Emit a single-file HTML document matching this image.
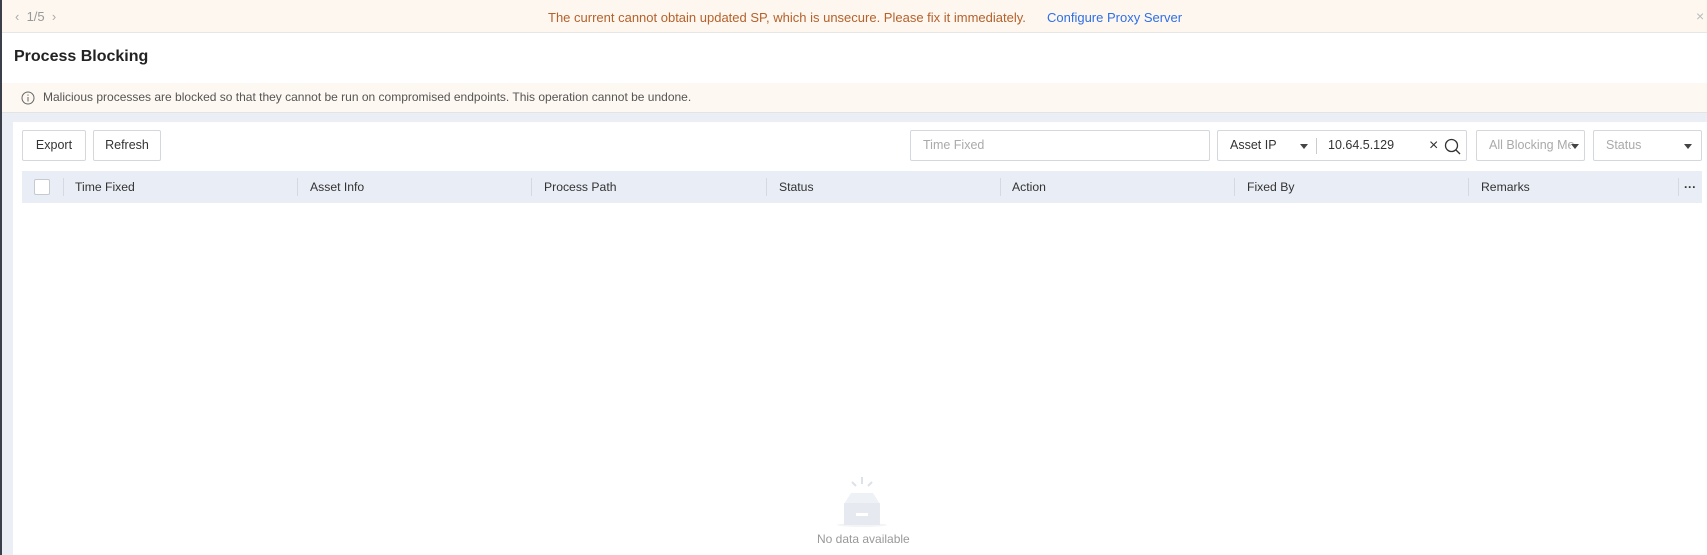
<!DOCTYPE html>
<html><head><meta charset="utf-8"><style>
*{box-sizing:border-box;margin:0;padding:0}
body{width:1707px;height:555px;overflow:hidden;background:#fff;font-family:"Liberation Sans",Arial,sans-serif;font-size:12.5px;color:#333;position:relative}
.abs{position:absolute}
.lb{left:0;top:0;width:2px;height:555px;background:#3a3f4a}
.top{left:2px;top:0;width:1705px;height:33px;background:#fdf7ef;border-bottom:1px solid #e6e6e6}
.info{left:2px;top:83px;width:1705px;height:29px;background:#fdf8f1}
.band{left:2px;top:112px;width:1705px;height:10px;background:#ebeef4;border-top:1px solid #e3e3e3}
.btn{border:1px solid #d4d7dc;border-radius:2px;background:#fff;height:31px;line-height:29px;text-align:center;color:#333}
.inp{border:1px solid #d4d7dc;border-radius:2px;background:#fff;height:31px;line-height:29px;color:#aaa;padding-left:12px}
.hdr{left:22px;top:171px;width:1680px;height:32px;background:#e9edf5}
.col{top:171px;height:32px;line-height:32px;color:#333;font-size:12.2px}
.div{top:178px;width:1px;height:18px;background:#d5d9e1}
.tri{display:inline-block;width:0;height:0;border-left:4px solid transparent;border-right:4px solid transparent;border-top:5px solid #444}
</style></head><body>
<div class="abs lb"></div>
<div class="abs top"></div>
<div class="abs" style="left:15px;top:9px;color:#aaa;font-size:13px">&#x2039;&nbsp; <span style="color:#999">1/5</span> &nbsp;&#x203A;</div>
<div class="abs" style="left:548px;top:10px;color:#b5612c;font-size:13px">The current cannot obtain updated SP, which is unsecure. Please fix it immediately.</div>
<div class="abs" style="left:1047px;top:10px;color:#2f6fe6;font-size:13px">Configure Proxy Server</div>
<div class="abs" style="left:1696px;top:8px;color:#bbb;font-size:14px">×</div>
<div class="abs" style="left:14px;top:48px;font-size:16px;font-weight:bold;color:#222">Process Blocking</div>
<div class="abs info"></div>
<svg class="abs" style="left:21px;top:91px" width="14" height="14" viewBox="0 0 14 14"><circle cx="7" cy="7" r="6" fill="none" stroke="#666" stroke-width="1"/><rect x="6.5" y="6" width="1" height="4.5" fill="#666"/><rect x="6.5" y="3.5" width="1" height="1.2" fill="#666"/></svg>
<div class="abs" style="left:43px;top:90px;color:#555;font-size:12px">Malicious processes are blocked so that they cannot be run on compromised endpoints. This operation cannot be undone.</div>
<div class="abs band"></div>
<div class="abs" style="left:2px;top:122px;width:11px;height:433px;background:#ebeef4"></div>
<div class="abs btn" style="left:22px;top:130px;width:64px">Export</div>
<div class="abs btn" style="left:93px;top:130px;width:68px">Refresh</div>
<div class="abs inp" style="left:910px;top:130px;width:300px">Time Fixed</div>
<div class="abs inp" style="left:1217px;top:130px;width:250px;color:#333">Asset IP<span class="abs tri" style="left:82px;top:13px"></span><span class="abs" style="left:98px;top:7px;width:1px;height:16px;background:#ccc"></span><span class="abs" style="left:110px;top:0">10.64.5.129</span><span class="abs" style="left:211px;top:0;font-size:16px">×</span><svg class="abs" style="left:226px;top:7px" width="17" height="17" viewBox="0 0 17 17"><circle cx="7.5" cy="7.5" r="6" fill="none" stroke="#333" stroke-width="1.3"/><path d="M12 12l4 4" stroke="#333" stroke-width="1.3"/></svg></div>
<div class="abs inp" style="left:1476px;top:130px;width:109px;overflow:hidden;white-space:nowrap;padding-left:12px">All Blocking Me<span class="abs tri" style="left:94px;top:13px;background:#fff"></span></div>
<div class="abs inp" style="left:1593px;top:130px;width:109px">Status<span class="abs tri" style="left:90px;top:13px"></span></div>
<div class="abs hdr"></div>
<div class="abs" style="left:34px;top:179px;width:16px;height:16px;border:1px solid #c5c9d0;background:#fff;border-radius:2px"></div>
<div class="abs div" style="left:63px"></div><div class="abs col" style="left:75px">Time Fixed</div>
<div class="abs div" style="left:297px"></div><div class="abs col" style="left:310px">Asset Info</div>
<div class="abs div" style="left:531px"></div><div class="abs col" style="left:544px">Process Path</div>
<div class="abs div" style="left:766px"></div><div class="abs col" style="left:779px">Status</div>
<div class="abs div" style="left:1000px"></div><div class="abs col" style="left:1012px">Action</div>
<div class="abs div" style="left:1234px"></div><div class="abs col" style="left:1247px">Fixed By</div>
<div class="abs div" style="left:1468px"></div><div class="abs col" style="left:1481px">Remarks</div>
<div class="abs div" style="left:1678px"></div><div class="abs col" style="left:1684px;font-weight:bold">···</div>
<svg class="abs" style="left:834px;top:472px" width="56" height="58" viewBox="0 0 56 58"><path d="M18 10l4 4M28 5v7M38 10l-4 4" stroke="#dde1e8" stroke-width="2"/><ellipse cx="28" cy="53" rx="25" ry="2" fill="#f2f4f7"/><path d="M17 21h22l7 11H10z" fill="#eef1f5"/><rect x="10" y="31" width="36" height="22" fill="#e6e9f0"/><rect x="22" y="41" width="12" height="3" fill="#fff"/></svg>
<div class="abs" style="left:817px;top:532px;color:#999;font-size:12px">No data available</div>
</body></html>
